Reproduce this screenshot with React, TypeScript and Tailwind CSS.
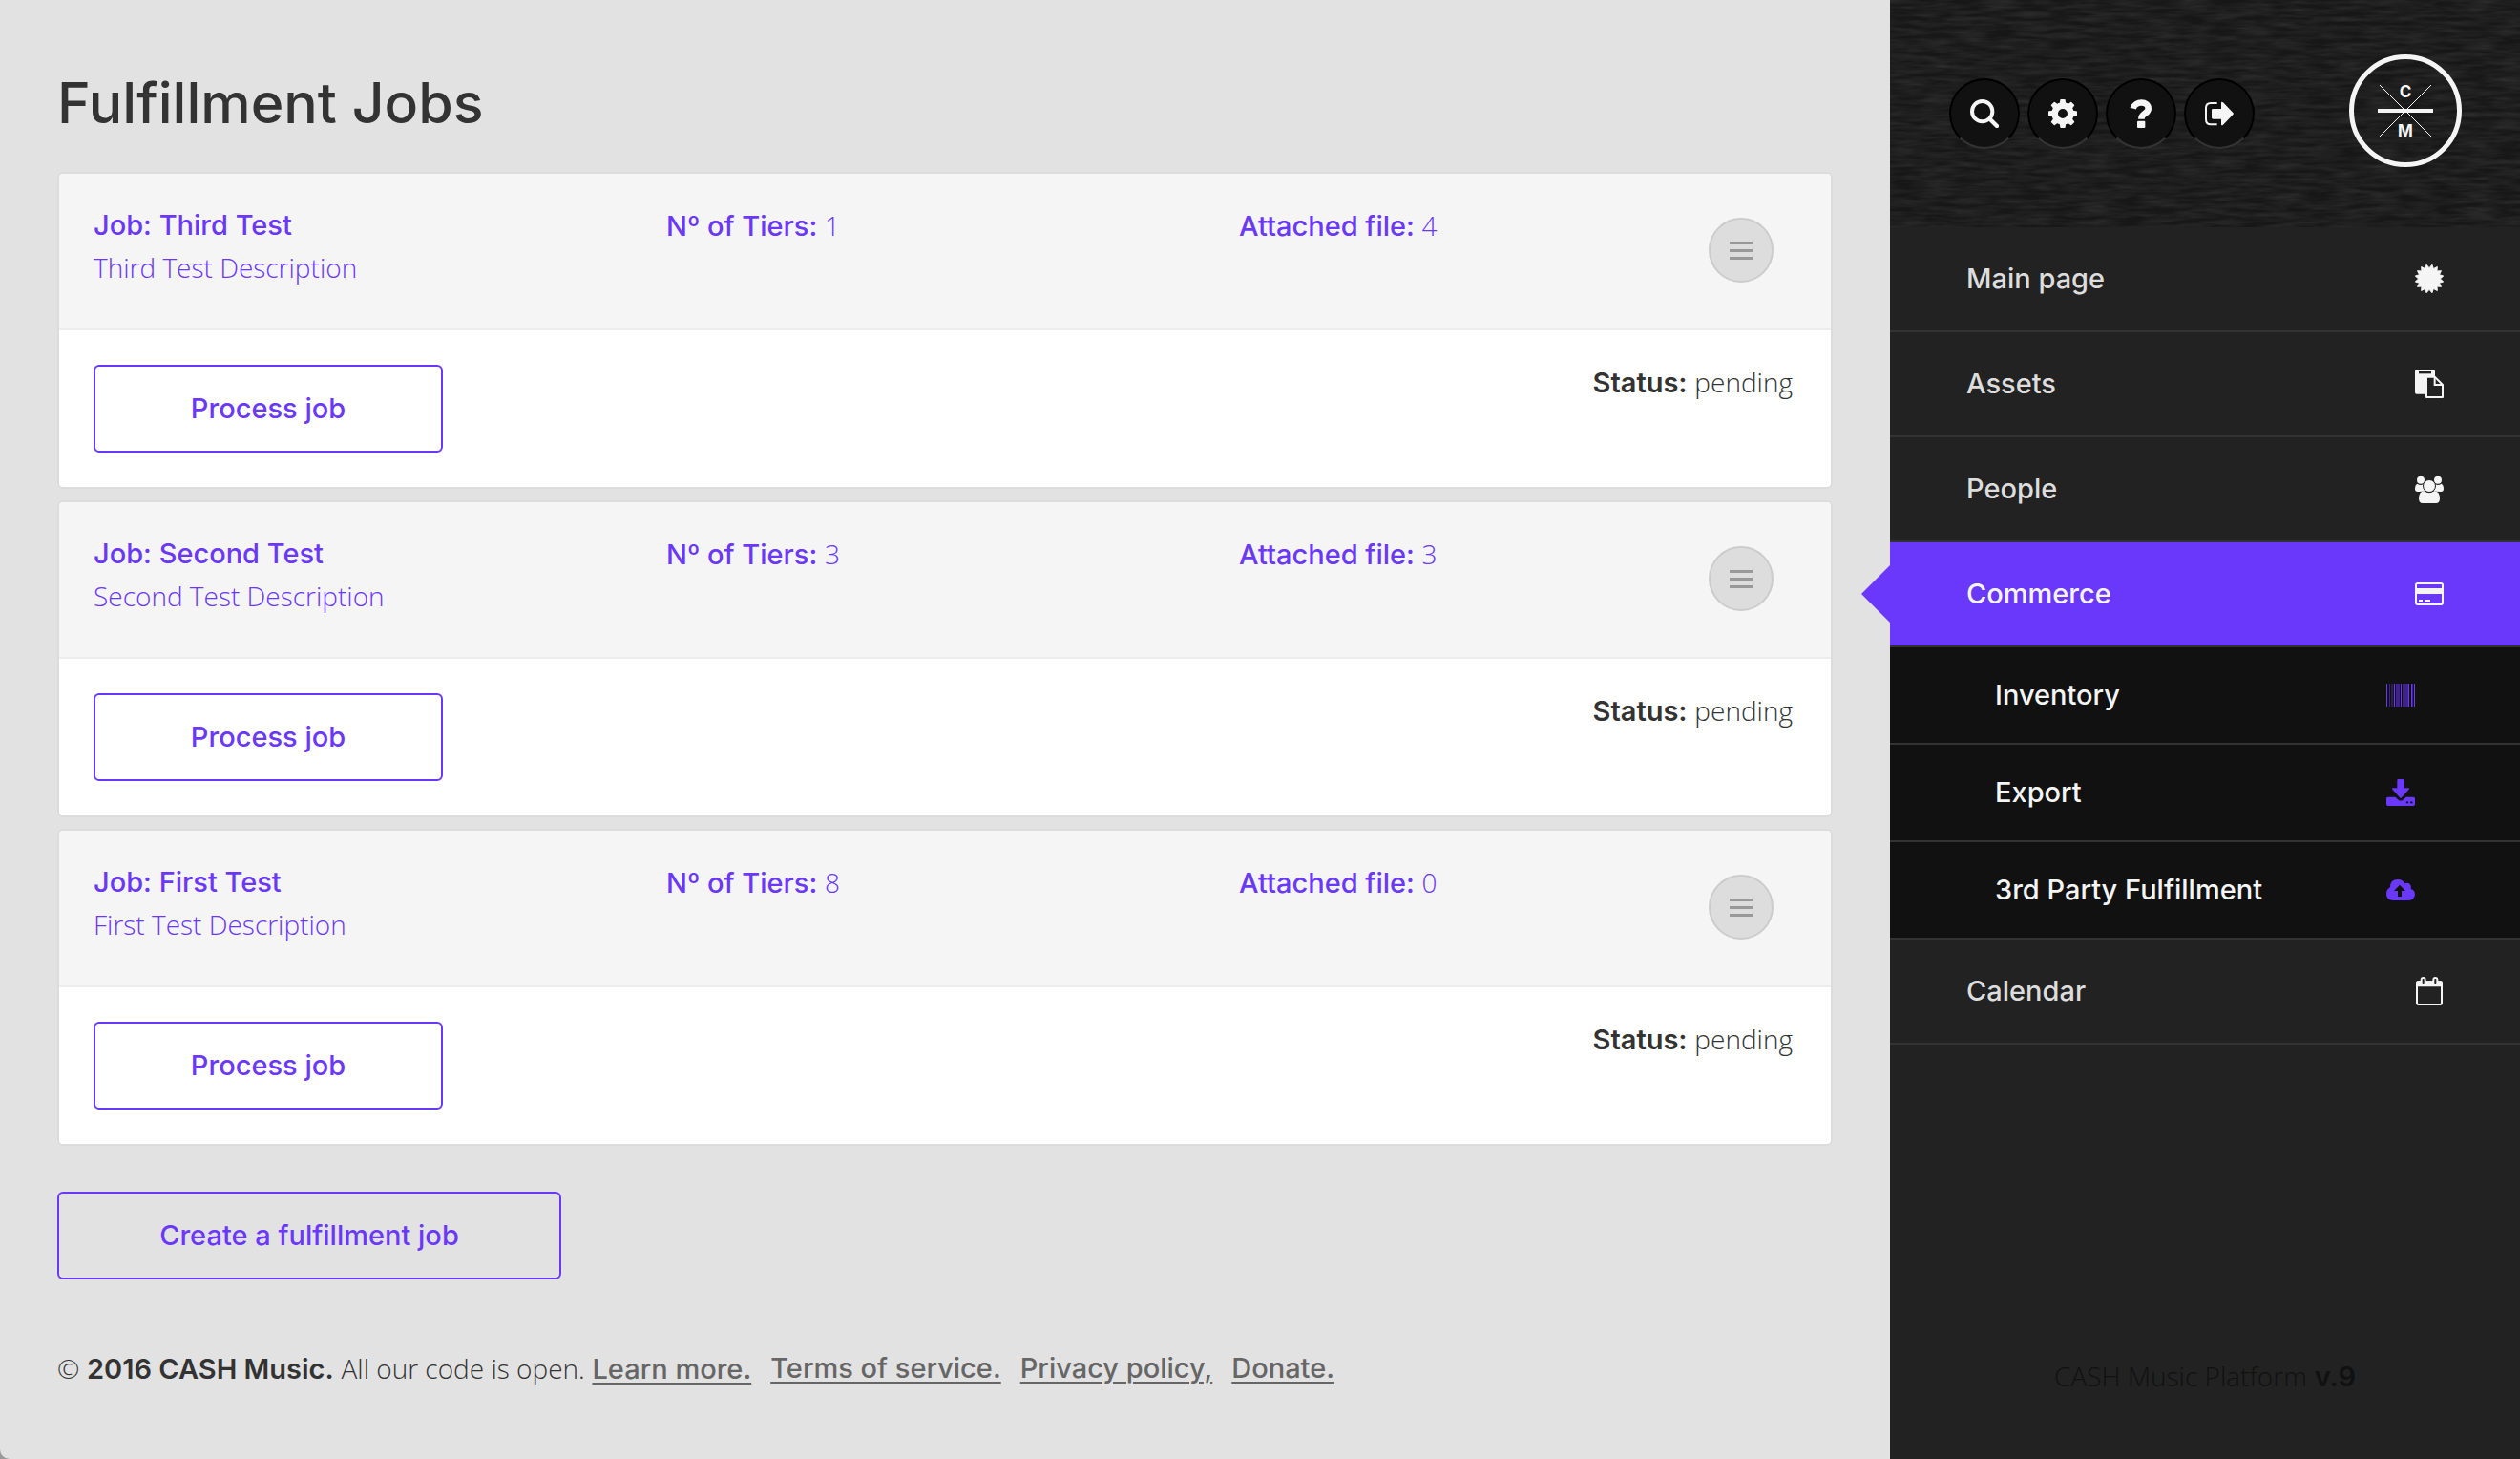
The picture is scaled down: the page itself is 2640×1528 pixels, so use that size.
import type { ReactNode } from "react";

const jobs = [
  { name: "Third Test", description: "Third Test Description", tiers: 1, file: 4 },
  { name: "Second Test", description: "Second Test Description", tiers: 3, file: 3 },
  { name: "First Test", description: "First Test Description", tiers: 8, file: 0 },
];

const footerLinks = ["Learn more.", "Terms of service.", "Privacy policy,", "Donate."];

function Light({ children }: { children: ReactNode }) {
  return <span className="font-['Open_Sans',sans-serif] text-[28px] font-[350]">{children}</span>;
}

function Icon({ children }: { children: ReactNode }) {
  return (
    <svg viewBox="0 0 90 90" className="size-[30px] shrink-0 fill-current" aria-hidden="true">
      {children}
    </svg>
  );
}

function SearchIcon() {
  return (
    <Icon>
      <circle cx="38" cy="38" r="32" fill="none" stroke="currentColor" strokeWidth="12" />
      <path d="M62 62 84 84" stroke="currentColor" strokeWidth="13" strokeLinecap="round" />
    </Icon>
  );
}

function GearIcon() {
  return (
    <Icon>
      <circle cx="45" cy="45" r="25" fill="none" stroke="currentColor" strokeWidth="20" />
      {[0, 45, 90, 135, 180, 225, 270, 315].map((angle) => (
        <path key={angle} d="M35 15 37 2Q37 0 39 0H51Q53 0 53 2L55 15Z" transform={`rotate(${angle} 45 45)`} />
      ))}
    </Icon>
  );
}

function QuestionIcon() {
  return (
    <Icon>
      <path d="M20 29C27 4 68 5 68 29C68 46 46 43 46 62" fill="none" stroke="currentColor" strokeWidth="20" />
      <rect x="33" y="68" width="25" height="22" rx="3" />
    </Icon>
  );
}

function SignOutIcon() {
  return (
    <Icon>
      <path d="M38 12H18Q3 12 3 27V64Q3 79 18 79H38" fill="none" stroke="currentColor" strokeWidth="6" />
      <path d="M25 30H51V12Q51 5 57 10L88 42Q91 45 88 48L57 80Q51 85 51 78V62H25Q21 62 21 58V34Q21 30 25 30Z" />
    </Icon>
  );
}

function StarburstIcon() {
  const points = Array.from({ length: 32 }, (_, i) => {
    const radius = i % 2 === 0 ? 45 : 34;
    const angle = ((i + 1) * Math.PI) / 16;
    return `${45 + radius * Math.sin(angle)},${45 - radius * Math.cos(angle)}`;
  }).join(" ");
  return (
    <Icon>
      <polygon points={points} stroke="currentColor" strokeWidth="3" strokeLinejoin="round" />
    </Icon>
  );
}

function PasteIcon() {
  return (
    <Icon>
      <rect width="63" height="77" rx="5" />
      <rect x="12" y="6" width="39" height="7" fill="#222" />
      <path d="M36 23H62L87 48V87H36Z" fill="#222" stroke="currentColor" strokeWidth="6" strokeLinejoin="round" />
      <path d="M62 24V48H86" fill="none" stroke="currentColor" strokeWidth="6" />
    </Icon>
  );
}

function PeopleIcon() {
  return (
    <Icon>
      <circle cx="18" cy="17" r="12" />
      <circle cx="72" cy="17" r="12" />
      <path d="M7 29Q18 36 26 30L30 50Q22 55 8 54Q0 54 0 45Q0 33 7 29Z" />
      <path d="M83 29Q72 36 64 30L60 50Q68 55 82 54Q90 54 90 45Q90 33 83 29Z" />
      <path d="M28 51Q45 64 62 51Q78 54 78 76Q78 90 66 90H24Q12 90 12 76Q12 54 28 51Z" />
      <circle cx="45" cy="36" r="19.5" stroke="#222" strokeWidth="3" />
    </Icon>
  );
}

function CardIcon() {
  return (
    <Icon>
      <rect x="3" y="12" width="84" height="66" rx="5" fill="none" stroke="currentColor" strokeWidth="6" />
      <path d="M3 27H87V45H3ZM12 63H24V69H12ZM30 63H48V69H30Z" />
    </Icon>
  );
}

function BarcodeIcon() {
  return (
    <Icon>
      <path d="M0 9H3V81H0ZM24 9H27V81H24ZM45 9H48V81H45ZM69 9H72V81H69ZM78 9H81V81H78ZM87 9H90V81H87Z" />
      <path d="M9 9H12V81H9ZM30 9H42V81H30ZM51 9H69V81H51ZM81 9H84V81H81Z" opacity="0.5" />
      <path d="M15 9H22V81H15Z" opacity="0.3" />
    </Icon>
  );
}

function DownloadIcon() {
  return (
    <Icon>
      <path d="M37 3H53Q56 3 56 6V31H70Q74 31 71 35L48 61Q45 64 42 61L19 35Q16 31 20 31H34V6Q34 3 37 3Z" />
      <path d="M5 59H28L38 68Q45 73 52 68L62 59H85Q90 59 90 64V82Q90 87 85 87H5Q0 87 0 82V64Q0 59 5 59Z" />
      <circle cx="66" cy="76" r="3.5" fill="#111" />
      <circle cx="79" cy="76" r="3.5" fill="#111" />
    </Icon>
  );
}

function CloudIcon() {
  return (
    <Icon>
      <path d="M20 78Q0 76 0 57Q0 43 12 37Q12 12 36 12Q51 12 58 25Q66 20 74 27Q80 33 77 42Q90 46 90 59Q88 76 71 78Z" />
      <path d="M42 29 60 48H48V66H36V48H24Z" fill="#111" />
    </Icon>
  );
}

function CalendarIcon() {
  return (
    <Icon>
      <rect x="6" y="16" width="78" height="71" rx="5" fill="none" stroke="currentColor" strokeWidth="6" />
      <path d="M4 16Q4 13 8 13H82Q86 13 86 16V31H4Z" />
      <rect x="17" width="18" height="28" rx="9" />
      <rect x="55" width="18" height="28" rx="9" />
      <rect x="23" y="6" width="6" height="18" rx="2" fill="#222" />
      <rect x="61" y="6" width="6" height="18" rx="2" fill="#222" />
    </Icon>
  );
}

function Logo() {
  return (
    <svg viewBox="0 0 118 118" className="size-[118px] text-[#f5f5f5]" role="img" aria-label="CASH Music">
      <circle cx="59" cy="59" r="56.5" fill="none" stroke="currentColor" strokeWidth="5" />
      <path d="M32 32 86 86M86 32 32 86" stroke="currentColor" strokeWidth="1" />
      <path d="M30 59H88" stroke="currentColor" strokeWidth="4" />
      <g fill="currentColor" textAnchor="middle" className="font-['Inter',sans-serif] text-[17px] font-bold">
        <text x="59" y="45">C</text>
        <text x="59" y="86">M</text>
      </g>
    </svg>
  );
}

function Fabric() {
  return (
    <svg className="absolute inset-0 size-full opacity-20" aria-hidden="true">
      <filter id="fabric" x="0" y="0" width="100%" height="100%">
        <feTurbulence type="fractalNoise" baseFrequency="0.03 0.22" numOctaves="3" seed="4" />
        <feColorMatrix values="0 0 0 0 0.22  0 0 0 0 0.22  0 0 0 0 0.22  1.6 0 0 0 -0.45" />
      </filter>
      <rect width="100%" height="100%" filter="url(#fabric)" />
    </svg>
  );
}

const tools = [
  { label: "Search", icon: <SearchIcon /> },
  { label: "Settings", icon: <GearIcon /> },
  { label: "Help", icon: <QuestionIcon /> },
  { label: "Sign out", icon: <SignOutIcon /> },
];

function NavItem({ label, icon, active = false }: { label: string; icon: ReactNode; active?: boolean }) {
  return (
    <a
      href="#"
      className={
        active
          ? "relative flex h-[110px] items-center justify-between border-b-2 border-[#333] bg-[#6a38fb] px-20 text-[#f5f5f5]"
          : "flex h-[110px] items-center justify-between border-b-2 border-[#333] px-20 text-[#ddd]"
      }
    >
      {active && (
        <span className="absolute top-6 right-full h-[60px] w-[30px] bg-[#6a38fb] [clip-path:polygon(100%_0,0_50%,100%_100%)]" />
      )}
      {label}
      <span className="text-[#f5f5f5]">{icon}</span>
    </a>
  );
}

function SubItem({ label, icon }: { label: string; icon: ReactNode }) {
  return (
    <a href="#" className="flex h-[102px] items-center justify-between border-b-2 border-[#333] bg-[#111] px-[110px] text-[#f5f5f5]">
      {label}
      <span className="text-[#6a38fb]">{icon}</span>
    </a>
  );
}

function JobCard({ job }: { job: (typeof jobs)[number] }) {
  return (
    <article className="overflow-hidden rounded-md border-2 border-[#dcdcdc] bg-white">
      <header className="grid min-h-[164px] grid-cols-3 border-b-2 border-[#ececec] bg-[#f5f5f5] pt-8 pr-5 pl-9 text-[#6a38fb]">
        <div>
          <h2>Job: {job.name}</h2>
          <p>
            <Light>{job.description}</Light>
          </p>
        </div>
        <p>
          Nº of Tiers: <Light>{job.tiers}</Light>
        </p>
        <div className="flex items-start justify-between pr-10">
          <p>
            Attached file: <Light>{job.file}</Light>
          </p>
          <button
            type="button"
            aria-label="Job menu"
            className="mt-[14px] flex size-[68px] flex-col items-center justify-center gap-[5px] rounded-full border-2 border-[#ccc] bg-[#ddd]"
          >
            <span className="h-[3px] w-6 bg-[#999]" />
            <span className="h-[3px] w-6 bg-[#999]" />
            <span className="h-[3px] w-6 bg-[#999]" />
          </button>
        </div>
      </header>
      <div className="flex items-start justify-between pr-10 pl-9">
        <button type="button" className="my-9 h-[92px] w-[366px] rounded-md border-2 border-[#6a38fb] text-[#6a38fb]">
          Process job
        </button>
        <p className="mt-8">
          <strong className="font-semibold">Status:</strong> <Light>pending</Light>
        </p>
      </div>
    </article>
  );
}

export default function App() {
  return (
    <div className="grid min-h-screen grid-cols-[3fr_1fr] bg-[#222] font-['Inter',sans-serif] text-[29px] leading-[44px] font-medium text-[#333]">
      <div className="grid bg-[#999]">
        <main className="rounded-bl-[10px] bg-[#e2e2e2] px-[60px] pt-[72px]">
          <h1 className="mb-9 text-[59px] leading-[72px]">Fulfillment Jobs</h1>
          <div className="flex flex-col gap-3">
            {jobs.map((job) => (
              <JobCard key={job.name} job={job} />
            ))}
          </div>
          <button type="button" className="mt-12 h-[92px] w-[528px] rounded-md border-2 border-[#6a38fb] text-[#6a38fb]">
            Create a fulfillment job
          </button>
          <footer className="mt-[71px] flex gap-5 pb-12">
            <p>
              <Light>©</Light> <strong className="font-semibold">2016 CASH Music.</strong>{" "}
              <Light>All our code is open.</Light>{" "}
              <a href="#" className="text-[#666] underline decoration-2 underline-offset-4">
                {footerLinks[0]}
              </a>
            </p>
            {footerLinks.slice(1).map((link) => (
              <a key={link} href="#" className="text-[#666] underline decoration-2 underline-offset-4">
                {link}
              </a>
            ))}
          </footer>
        </main>
      </div>
      <aside className="flex flex-col">
        <div className="relative bg-[#171717]">
          <Fabric />
          <div className="relative flex h-[238px] items-start justify-between pr-[61px] pl-[62px]">
            <div className="mt-[82px] flex gap-2">
              {tools.map((tool) => (
                <button
                  key={tool.label}
                  type="button"
                  aria-label={tool.label}
                  className="flex size-[74px] items-center justify-center rounded-full border-2 border-black border-b-[#333] bg-[#111] text-[#f5f5f5]"
                >
                  {tool.icon}
                </button>
              ))}
            </div>
            <a href="#" className="mt-[57px]">
              <Logo />
            </a>
          </div>
        </div>
        <nav>
          <NavItem label="Main page" icon={<StarburstIcon />} />
          <NavItem label="Assets" icon={<PasteIcon />} />
          <NavItem label="People" icon={<PeopleIcon />} />
          <NavItem label="Commerce" icon={<CardIcon />} active />
          <SubItem label="Inventory" icon={<BarcodeIcon />} />
          <SubItem label="Export" icon={<DownloadIcon />} />
          <SubItem label="3rd Party Fulfillment" icon={<CloudIcon />} />
          <NavItem label="Calendar" icon={<CalendarIcon />} />
        </nav>
        <p className="mt-auto pb-16 text-center text-[#111]">
          <Light>CASH Music Platform</Light> <strong className="font-semibold">v.9</strong>
        </p>
      </aside>
    </div>
  );
}
